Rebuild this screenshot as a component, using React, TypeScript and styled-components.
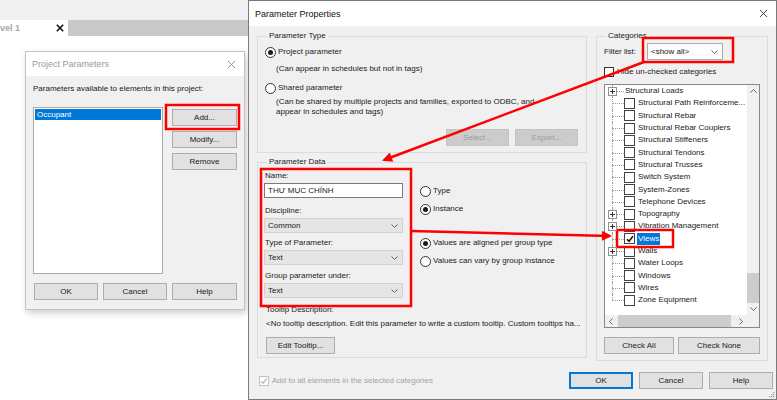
import React from 'react';
import styled, { createGlobalStyle } from 'styled-components';

const GlobalStyle = createGlobalStyle`
  * { box-sizing: border-box; }
  html, body { margin: 0; padding: 0; background: #fff; }
  body {
    font-family: "Liberation Sans", Arial, sans-serif;
    font-size: 8px;
    line-height: 10px;
    color: #1a1a1a;
  }
`;

const Desktop = styled.div`
  position: relative;
  width: 777px;
  height: 400px;
  overflow: hidden;
  background: #fff;
`;

const TopBand = styled.div`
  height: 20px;
  background: #f0f0f0;
`;

const TabStrip = styled.div`
  display: flex;
  width: 248px;
  height: 16px;
  background: #c9c9c9;
`;

const DocTab = styled.div`
  display: flex;
  align-items: center;
  justify-content: space-between;
  width: 68px;
  padding-right: 4px;
  background: #fff;
`;

const DocTabLabel = styled.span`
  font-size: 9px;
  font-weight: bold;
  color: #a8a8a8;
`;

const Window = styled.div<{ $x: number; $y: number; $w: number; $h: number; $active?: boolean }>`
  position: absolute;
  left: ${p => p.$x}px;
  top: ${p => p.$y}px;
  width: ${p => p.$w}px;
  height: ${p => p.$h}px;
  display: flex;
  flex-direction: column;
  background: #f0f0f0;
  border: 1px solid ${p => (p.$active ? '#7a7a7a' : '#c4c4c4')};
  box-shadow: ${p => (p.$active ? 'none' : '2px 3px 7px rgba(0, 0, 0, 0.2)')};
`;

const TitleBar = styled.div<{ $h: number }>`
  flex: none;
  display: flex;
  align-items: center;
  justify-content: space-between;
  height: ${p => p.$h}px;
  padding: 0 8px 0 6px;
  background: #fff;
`;

const TitleText = styled.span<{ $active?: boolean }>`
  font-size: 9px;
  color: ${p => (p.$active ? '#111' : '#9a9a9a')};
`;

const Button = styled.div<{ $w: number; $h?: number; $top?: number; $default?: boolean; $disabled?: boolean }>`
  flex: none;
  display: flex;
  align-items: center;
  justify-content: center;
  width: ${p => p.$w}px;
  height: ${p => p.$h ?? 17}px;
  margin-top: ${p => p.$top ?? 0}px;
  color: ${p => (p.$disabled ? '#9c9c9c' : '#1a1a1a')};
  background: ${p => (p.$disabled ? '#cccccc' : '#e1e1e1')};
  border: 1px solid ${p => (p.$default ? '#0078d7' : p.$disabled ? '#c4c4c4' : '#adadad')};
  box-shadow: ${p => (p.$default ? 'inset 0 0 0 1px #0078d7' : 'none')};
`;

/* ---------- Project Parameters ---------- */

const PPBody = styled.div`
  flex: 1;
  display: flex;
  flex-direction: column;
  padding: 8px 7px 0 7px;
`;

const Caption = styled.div`
  height: 10px;
  margin-bottom: 13px;
`;

const PPMain = styled.div`
  display: flex;
  gap: 9px;
  height: 167px;
`;

const ListBox = styled.div`
  width: 130px;
  padding: 1px;
  background: #fff;
  border: 1px solid #a9a9a9;
`;

const ListItem = styled.div<{ $selected?: boolean }>`
  height: 11px;
  line-height: 11px;
  padding-left: 2px;
  color: ${p => (p.$selected ? '#fff' : '#1a1a1a')};
  background: ${p => (p.$selected ? '#0078d7' : 'transparent')};
`;

const SideButtons = styled.div`
  display: flex;
  flex-direction: column;
  gap: 5px;
  padding-top: 2px;
`;

const PPFooter = styled.div`
  display: flex;
  gap: 5px;
  margin-top: 9px;
  padding-left: 1px;
`;

/* ---------- Parameter Properties ---------- */

const PropsBody = styled.div`
  flex: none;
  display: grid;
  grid-template-columns: 330px 172px;
  column-gap: 9px;
  align-items: start;
  padding: 5px 8px 0 8px;
`;

const LeftColumn = styled.div`
  display: flex;
  flex-direction: column;
  gap: 4px;
`;

const GroupBox = styled.fieldset<{ $h: number }>`
  display: flex;
  flex-direction: column;
  min-width: 0;
  height: ${p => p.$h}px;
  margin: 0;
  padding: 0 7px;
  border: 1px solid #dcdcdc;
`;

const GroupLegend = styled.legend`
  margin-left: 2px;
  padding: 0 2px;
  line-height: 10px;
  color: #222;
`;

const RadioRow = styled.div<{ $gap?: number }>`
  display: flex;
  align-items: center;
  gap: 2px;
  height: 12px;
  margin-top: ${p => p.$gap ?? 0}px;
`;

const RadioCircle = styled.span<{ $on?: boolean }>`
  flex: none;
  display: grid;
  place-items: center;
  width: 11px;
  height: 11px;
  border: 1px solid #333;
  border-radius: 50%;
  background: #fff;

  &::after {
    content: '';
    width: 5px;
    height: 5px;
    border-radius: 50%;
    background: ${p => (p.$on ? '#1a1a1a' : 'transparent')};
  }
`;

const Note = styled.div<{ $gap: number }>`
  margin-top: ${p => p.$gap}px;
  margin-left: 11px;
  line-height: 10px;
`;

const TypeButtons = styled.div`
  display: flex;
  justify-content: flex-end;
  gap: 6px;
  margin-top: 12px;
  padding-right: 1px;
`;

const DataGrid = styled.div`
  display: grid;
  grid-template-columns: 139px 1fr;
  column-gap: 17px;
  margin-left: -1px;
  padding-top: 4px;
`;

const FieldStack = styled.div`
  display: flex;
  flex-direction: column;
`;

const FieldLabel = styled.div<{ $gap: number }>`
  height: 10px;
  margin: ${p => p.$gap}px 0 2px 1px;
`;

const TextInput = styled.div`
  display: flex;
  align-items: center;
  height: 15px;
  padding-left: 3px;
  background: #fff;
  border: 1px solid #7a7a7a;
`;

const Select = styled.div<{ $w?: number; $light?: boolean }>`
  display: flex;
  align-items: center;
  justify-content: space-between;
  width: ${p => (p.$w ? `${p.$w}px` : 'auto')};
  height: ${p => (p.$light ? 17 : 15)}px;
  padding: 0 4px 0 3px;
  background: ${p => (p.$light ? '#fdfdfd' : '#e5e5e5')};
  border: 1px solid ${p => (p.$light ? '#adadad' : '#d0d0d0')};
`;

const RadioStack = styled.div`
  display: flex;
  flex-direction: column;
`;

const TooltipBlock = styled.div`
  display: flex;
  flex-direction: column;
  margin-left: 1px;
`;

const TooltipText = styled.div<{ $gap: number }>`
  margin-top: ${p => p.$gap}px;
  white-space: nowrap;
`;

const FilterRow = styled.div`
  display: flex;
  align-items: center;
  gap: 6px;
  height: 17px;
  margin-top: 2px;
`;

const FilterLabel = styled.span`
  width: 37px;
`;

const CheckRow = styled.div<{ $gap?: number; $muted?: boolean }>`
  display: flex;
  align-items: center;
  gap: 3px;
  height: 11px;
  margin-top: ${p => p.$gap ?? 0}px;
  color: ${p => (p.$muted ? '#a3a3a3' : '#1a1a1a')};
`;

const CheckBox = styled.span<{ $muted?: boolean }>`
  flex: none;
  display: grid;
  place-items: center;
  width: 10px;
  height: 10px;
  border: 1px solid ${p => (p.$muted ? '#c2c2c2' : '#333')};
  background: #fff;
`;

const TreeBox = styled.div`
  display: grid;
  grid-template-columns: 1fr 12px;
  grid-template-rows: 1fr 12px;
  height: 244px;
  margin-top: 7px;
  background: #fff;
  border: 1px solid #828790;
`;

const TreeRows = styled.div`
  overflow: hidden;
`;

const TreeRow = styled.div<{ $indent: number; $last?: boolean }>`
  position: relative;
  display: flex;
  align-items: center;
  height: 12.3px;
  padding-left: ${p => p.$indent}px;
  white-space: nowrap;

  &::before {
    content: '';
    position: absolute;
    left: 7px;
    top: 50%;
    width: 12px;
    border-top: 1px dotted #a0a0a0;
  }

  &::after {
    content: '';
    position: absolute;
    left: 7px;
    top: 0;
    bottom: ${p => (p.$last ? '50%' : '0')};
    border-left: 1px dotted #a0a0a0;
  }
`;

const Expander = styled.svg`
  position: absolute;
  left: 3px;
  top: 2px;
  z-index: 1;
`;

const TreeCheck = styled(CheckBox)`
  width: 11px;
  height: 11px;
  margin-right: 3px;
  border-color: #444;
`;

const TreeLabel = styled.span<{ $selected?: boolean }>`
  padding: 1px 1px;
  margin-left: -1px;
  color: ${p => (p.$selected ? '#fff' : '#1a1a1a')};
  background: ${p => (p.$selected ? '#0078d7' : 'transparent')};
`;

const VScroll = styled.div`
  display: flex;
  flex-direction: column;
  background: #f0f0f0;
`;

const HScroll = styled.div`
  display: flex;
  background: #f0f0f0;
`;

const ScrollArrow = styled.div`
  flex: none;
  display: grid;
  place-items: center;
  width: 12px;
  height: 12px;
`;

const VTrack = styled.div`
  flex: 1;
  display: flex;
  flex-direction: column;
  justify-content: flex-end;
`;

const HTrack = styled.div`
  flex: 1;
  display: flex;
  padding-left: 1px;
`;

const Thumb = styled.div<{ $w: number | string; $h: number | string }>`
  width: ${p => (typeof p.$w === 'number' ? `${p.$w}px` : p.$w)};
  height: ${p => (typeof p.$h === 'number' ? `${p.$h}px` : p.$h)};
  background: #cdcdcd;
`;

const ScrollCorner = styled.div`
  background: #f0f0f0;
`;

const CheckButtons = styled.div`
  display: flex;
  gap: 4px;
  margin-top: 9px;
`;

const PropsFooter = styled.div`
  display: flex;
  align-items: center;
  justify-content: space-between;
  height: 17px;
  margin-top: 11px;
  padding: 0 3px 0 10px;
`;

const FooterButtons = styled.div`
  display: flex;
  gap: 6px;
`;

const Grip = styled.svg`
  position: absolute;
  right: 1px;
  bottom: 1px;
`;

const Annotations = styled.svg`
  position: absolute;
  left: 0;
  top: 0;
  pointer-events: none;
`;

/* ---------- small drawings ---------- */

const CloseIcon = ({ color, size = 9, weight = 1 }: { color: string; size?: number; weight?: number }) => (
  <svg width={size} height={size} viewBox="0 0 10 10">
    <path d="M1 1 L9 9 M9 1 L1 9" stroke={color} strokeWidth={weight} fill="none" />
  </svg>
);

const Chevron = ({ dir = 'down' }: { dir?: 'down' | 'up' | 'left' | 'right' }) => {
  const d = {
    down: 'M0.5 0.5 L3.5 3.5 L6.5 0.5',
    up: 'M0.5 3.5 L3.5 0.5 L6.5 3.5',
    left: 'M3.5 0.5 L0.5 3.5 L3.5 6.5',
    right: 'M0.5 0.5 L3.5 3.5 L0.5 6.5',
  }[dir];
  const horizontal = dir === 'left' || dir === 'right';
  return (
    <svg width={horizontal ? 4 : 7} height={horizontal ? 7 : 4} viewBox={horizontal ? '0 0 4 7' : '0 0 7 4'}>
      <path d={d} stroke="#666" strokeWidth={1} fill="none" />
    </svg>
  );
};

const Tick = ({ color = '#111' }: { color?: string }) => (
  <svg width="8" height="8" viewBox="0 0 8 8">
    <path d="M1 4.2 L3 6.3 L7 1.3" stroke={color} strokeWidth={1.5} fill="none" />
  </svg>
);

const PlusBox = () => (
  <Expander width="9" height="9" viewBox="0 0 9 9">
    <rect x="0.5" y="0.5" width="8" height="8" fill="#fff" stroke="#919191" />
    <path d="M2 4.5 H7 M4.5 2 V7" stroke="#333" strokeWidth={1} />
  </Expander>
);

type Category = { name: string; expand?: boolean; noBox?: boolean; checked?: boolean };

const categories: Category[] = [
  { name: 'Structural Loads', expand: true, noBox: true },
  { name: 'Structural Path Reinforceme...' },
  { name: 'Structural Rebar' },
  { name: 'Structural Rebar Couplers' },
  { name: 'Structural Stiffeners' },
  { name: 'Structural Tendons' },
  { name: 'Structural Trusses' },
  { name: 'Switch System' },
  { name: 'System-Zones' },
  { name: 'Telephone Devices' },
  { name: 'Topography', expand: true },
  { name: 'Vibration Management', expand: true },
  { name: 'Views', checked: true },
  { name: 'Walls', expand: true },
  { name: 'Water Loops' },
  { name: 'Windows' },
  { name: 'Wires' },
  { name: 'Zone Equipment' },
];

const App = () => (
  <Desktop>
    <GlobalStyle />
    <TopBand />
    <TabStrip>
      <DocTab>
        <DocTabLabel>vel 1</DocTabLabel>
        <CloseIcon color="#111" size={8} weight={2} />
      </DocTab>
    </TabStrip>

    <Window $x={25} $y={51} $w={220} $h={259}>
      <TitleBar $h={24}>
        <TitleText>Project Parameters</TitleText>
        <CloseIcon color="#8a8a8a" />
      </TitleBar>
      <PPBody>
        <Caption>Parameters available to elements in this project:</Caption>
        <PPMain>
          <ListBox>
            <ListItem $selected>Occupant</ListItem>
          </ListBox>
          <SideButtons>
            <Button $w={65}>Add...</Button>
            <Button $w={65}>Modify...</Button>
            <Button $w={65}>Remove</Button>
          </SideButtons>
        </PPMain>
        <PPFooter>
          <Button $w={64}>OK</Button>
          <Button $w={64}>Cancel</Button>
          <Button $w={65}>Help</Button>
        </PPFooter>
      </PPBody>
    </Window>

    <Window $x={248} $y={0} $w={529} $h={400} $active>
      <TitleBar $h={25}>
        <TitleText $active>Parameter Properties</TitleText>
        <CloseIcon color="#333" />
      </TitleBar>
      <PropsBody>
        <LeftColumn>
          <GroupBox $h={122}>
            <GroupLegend>Parameter Type</GroupLegend>
            <RadioRow $gap={5}>
              <RadioCircle $on />
              Project parameter
            </RadioRow>
            <Note $gap={6}>(Can appear in schedules but not in tags)</Note>
            <RadioRow $gap={8}>
              <RadioCircle />
              Shared parameter
            </RadioRow>
            <Note $gap={3}>
              (Can be shared by multiple projects and families, exported to ODBC, and
              <br />
              appear in schedules and tags)
            </Note>
            <TypeButtons>
              <Button $w={63} $disabled>Select...</Button>
              <Button $w={63} $disabled>Export...</Button>
            </TypeButtons>
          </GroupBox>

          <GroupBox $h={201}>
            <GroupLegend>Parameter Data</GroupLegend>
            <DataGrid>
              <FieldStack>
                <FieldLabel $gap={0}>Name:</FieldLabel>
                <TextInput>THƯ MỤC CHÍNH</TextInput>
                <FieldLabel $gap={8}>Discipline:</FieldLabel>
                <Select>
                  Common
                  <Chevron />
                </Select>
                <FieldLabel $gap={5}>Type of Parameter:</FieldLabel>
                <Select>
                  Text
                  <Chevron />
                </Select>
                <FieldLabel $gap={6}>Group parameter under:</FieldLabel>
                <Select>
                  Text
                  <Chevron />
                </Select>
              </FieldStack>
              <RadioStack>
                <RadioRow $gap={14}>
                  <RadioCircle />
                  Type
                </RadioRow>
                <RadioRow $gap={6}>
                  <RadioCircle $on />
                  Instance
                </RadioRow>
                <RadioRow $gap={22}>
                  <RadioCircle $on />
                  Values are aligned per group type
                </RadioRow>
                <RadioRow $gap={6}>
                  <RadioCircle />
                  Values can vary by group instance
                </RadioRow>
              </RadioStack>
            </DataGrid>
            <TooltipBlock>
              <TooltipText $gap={7}>Tooltip Description:</TooltipText>
              <TooltipText $gap={4}>
                &lt;No tooltip description. Edit this parameter to write a custom tooltip. Custom tooltips ha...
              </TooltipText>
              <Button $w={69} $top={8}>Edit Tooltip...</Button>
            </TooltipBlock>
          </GroupBox>
        </LeftColumn>

        <GroupBox $h={330}>
          <GroupLegend>Categories</GroupLegend>
          <FilterRow>
            <FilterLabel>Filter list:</FilterLabel>
            <Select $w={76} $light>
              &lt;show all&gt;
              <Chevron />
            </Select>
          </FilterRow>
          <CheckRow $gap={6}>
            <CheckBox />
            Hide un-checked categories
          </CheckRow>
          <TreeBox>
            <TreeRows>
              {categories.map((c, i) => (
                <TreeRow key={c.name} $indent={c.noBox ? 20 : 19} $last={i === categories.length - 1}>
                  {c.expand && <PlusBox />}
                  {!c.noBox && <TreeCheck>{c.checked && <Tick />}</TreeCheck>}
                  <TreeLabel $selected={c.checked}>{c.name}</TreeLabel>
                </TreeRow>
              ))}
            </TreeRows>
            <VScroll>
              <ScrollArrow>
                <Chevron dir="up" />
              </ScrollArrow>
              <VTrack>
                <Thumb $w="100%" $h={30} />
              </VTrack>
              <ScrollArrow>
                <Chevron dir="down" />
              </ScrollArrow>
            </VScroll>
            <HScroll>
              <ScrollArrow>
                <Chevron dir="left" />
              </ScrollArrow>
              <HTrack>
                <Thumb $w={113} $h="100%" />
              </HTrack>
              <ScrollArrow>
                <Chevron dir="right" />
              </ScrollArrow>
            </HScroll>
            <ScrollCorner />
          </TreeBox>
          <CheckButtons>
            <Button $w={70}>Check All</Button>
            <Button $w={82}>Check None</Button>
          </CheckButtons>
        </GroupBox>
      </PropsBody>

      <PropsFooter>
        <CheckRow $muted>
          <CheckBox $muted>
            <Tick color="#c4c4c4" />
          </CheckBox>
          Add to all elements in the selected categories
        </CheckRow>
        <FooterButtons>
          <Button $w={64} $default>OK</Button>
          <Button $w={64}>Cancel</Button>
          <Button $w={64}>Help</Button>
        </FooterButtons>
      </PropsFooter>
      <Grip width="7" height="7" viewBox="0 0 7 7">
        <rect x="5" y="1" width="1.2" height="1.2" fill="#999" />
        <rect x="3" y="3" width="1.2" height="1.2" fill="#999" />
        <rect x="5" y="3" width="1.2" height="1.2" fill="#999" />
        <rect x="1" y="5" width="1.2" height="1.2" fill="#999" />
        <rect x="3" y="5" width="1.2" height="1.2" fill="#999" />
        <rect x="5" y="5" width="1.2" height="1.2" fill="#999" />
      </Grip>
    </Window>

    <Annotations width={777} height={400} viewBox="0 0 777 400">
      <defs>
        <marker id="arrowhead" viewBox="0 0 10 10" refX="8" refY="5" markerWidth="5" markerHeight="4" orient="auto">
          <path d="M0 0 L10 5 L0 10 Z" fill="#ff0000" />
        </marker>
      </defs>
      <g fill="none" stroke="#ff0000" strokeWidth={2.5}>
        <rect x={166} y={105} width={73} height={24} />
        <rect x={643} y={38} width={90} height={24} />
        <rect x={261} y={169} width={150} height={137} />
        <rect x={617} y={230} width={56} height={17} />
        <line x1={644} y1={62} x2={384} y2={160} markerEnd="url(#arrowhead)" />
        <line x1={411} y1={231} x2={610} y2={236} markerEnd="url(#arrowhead)" />
      </g>
    </Annotations>
  </Desktop>
);

export default App;
